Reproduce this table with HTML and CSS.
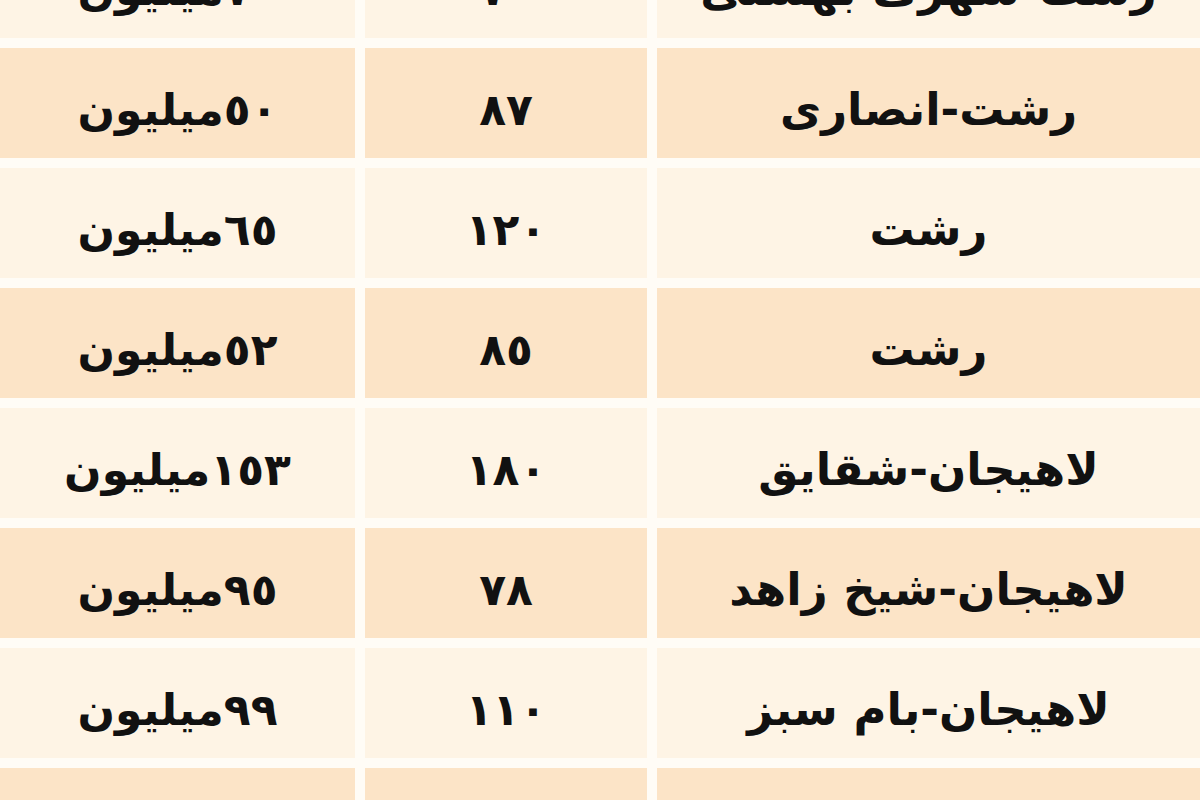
FILE: index.html
```html
<!DOCTYPE html>
<html lang="fa" dir="rtl">
<head>
<meta charset="utf-8">
<title>قیمت</title>
<link rel="stylesheet" href="styles.css">
</head>
<body>
<div class="table">
  <div class="cell loc light">رشت-شهرک بهشتی</div><div class="cell num light">٧٠</div><div class="cell price light">٧٠میلیون</div>
  <div class="cell loc dark">رشت-انصاری</div><div class="cell num dark">٨٧</div><div class="cell price dark">٥٠میلیون</div>
  <div class="cell loc light">رشت</div><div class="cell num light">١٢٠</div><div class="cell price light">٦٥میلیون</div>
  <div class="cell loc dark">رشت</div><div class="cell num dark">٨٥</div><div class="cell price dark">٥٢میلیون</div>
  <div class="cell loc light">لاهیجان-شقایق</div><div class="cell num light">١٨٠</div><div class="cell price light">١٥٣میلیون</div>
  <div class="cell loc dark">لاهیجان-شیخ زاهد</div><div class="cell num dark">٧٨</div><div class="cell price dark">٩٥میلیون</div>
  <div class="cell loc light">لاهیجان-بام سبز</div><div class="cell num light">١١٠</div><div class="cell price light">٩٩میلیون</div>
  <div class="cell loc dark">لاهیجان-کوی آزادگان</div><div class="cell num dark">٧٠</div><div class="cell price dark">٥٧میلیون</div>
</div>
</body>
</html>
```
FILE: styles.css
```css
html, body {
  margin: 0;
  padding: 0;
  background: #fffcf6;
  overflow: hidden;
  height: 800px;
}
.table {
  display: grid;
  grid-template-columns: 543px 282px 355px;
  grid-auto-rows: 110px;
  column-gap: 10px;
  row-gap: 10px;
  margin-top: -72px;
  width: 1200px;
}
.cell {
  display: flex;
  align-items: center;
  justify-content: center;
  box-sizing: border-box;
  padding-top: 12px;
  font-family: "DejaVu Sans", "Noto Sans", sans-serif;
  font-weight: bold;
  font-size: 44px;
  color: #111;
  white-space: nowrap;
}
.loc { font-size: 45px; }
.dark { background: #fce4c7; }
.light { background: #fef4e5; }
```
